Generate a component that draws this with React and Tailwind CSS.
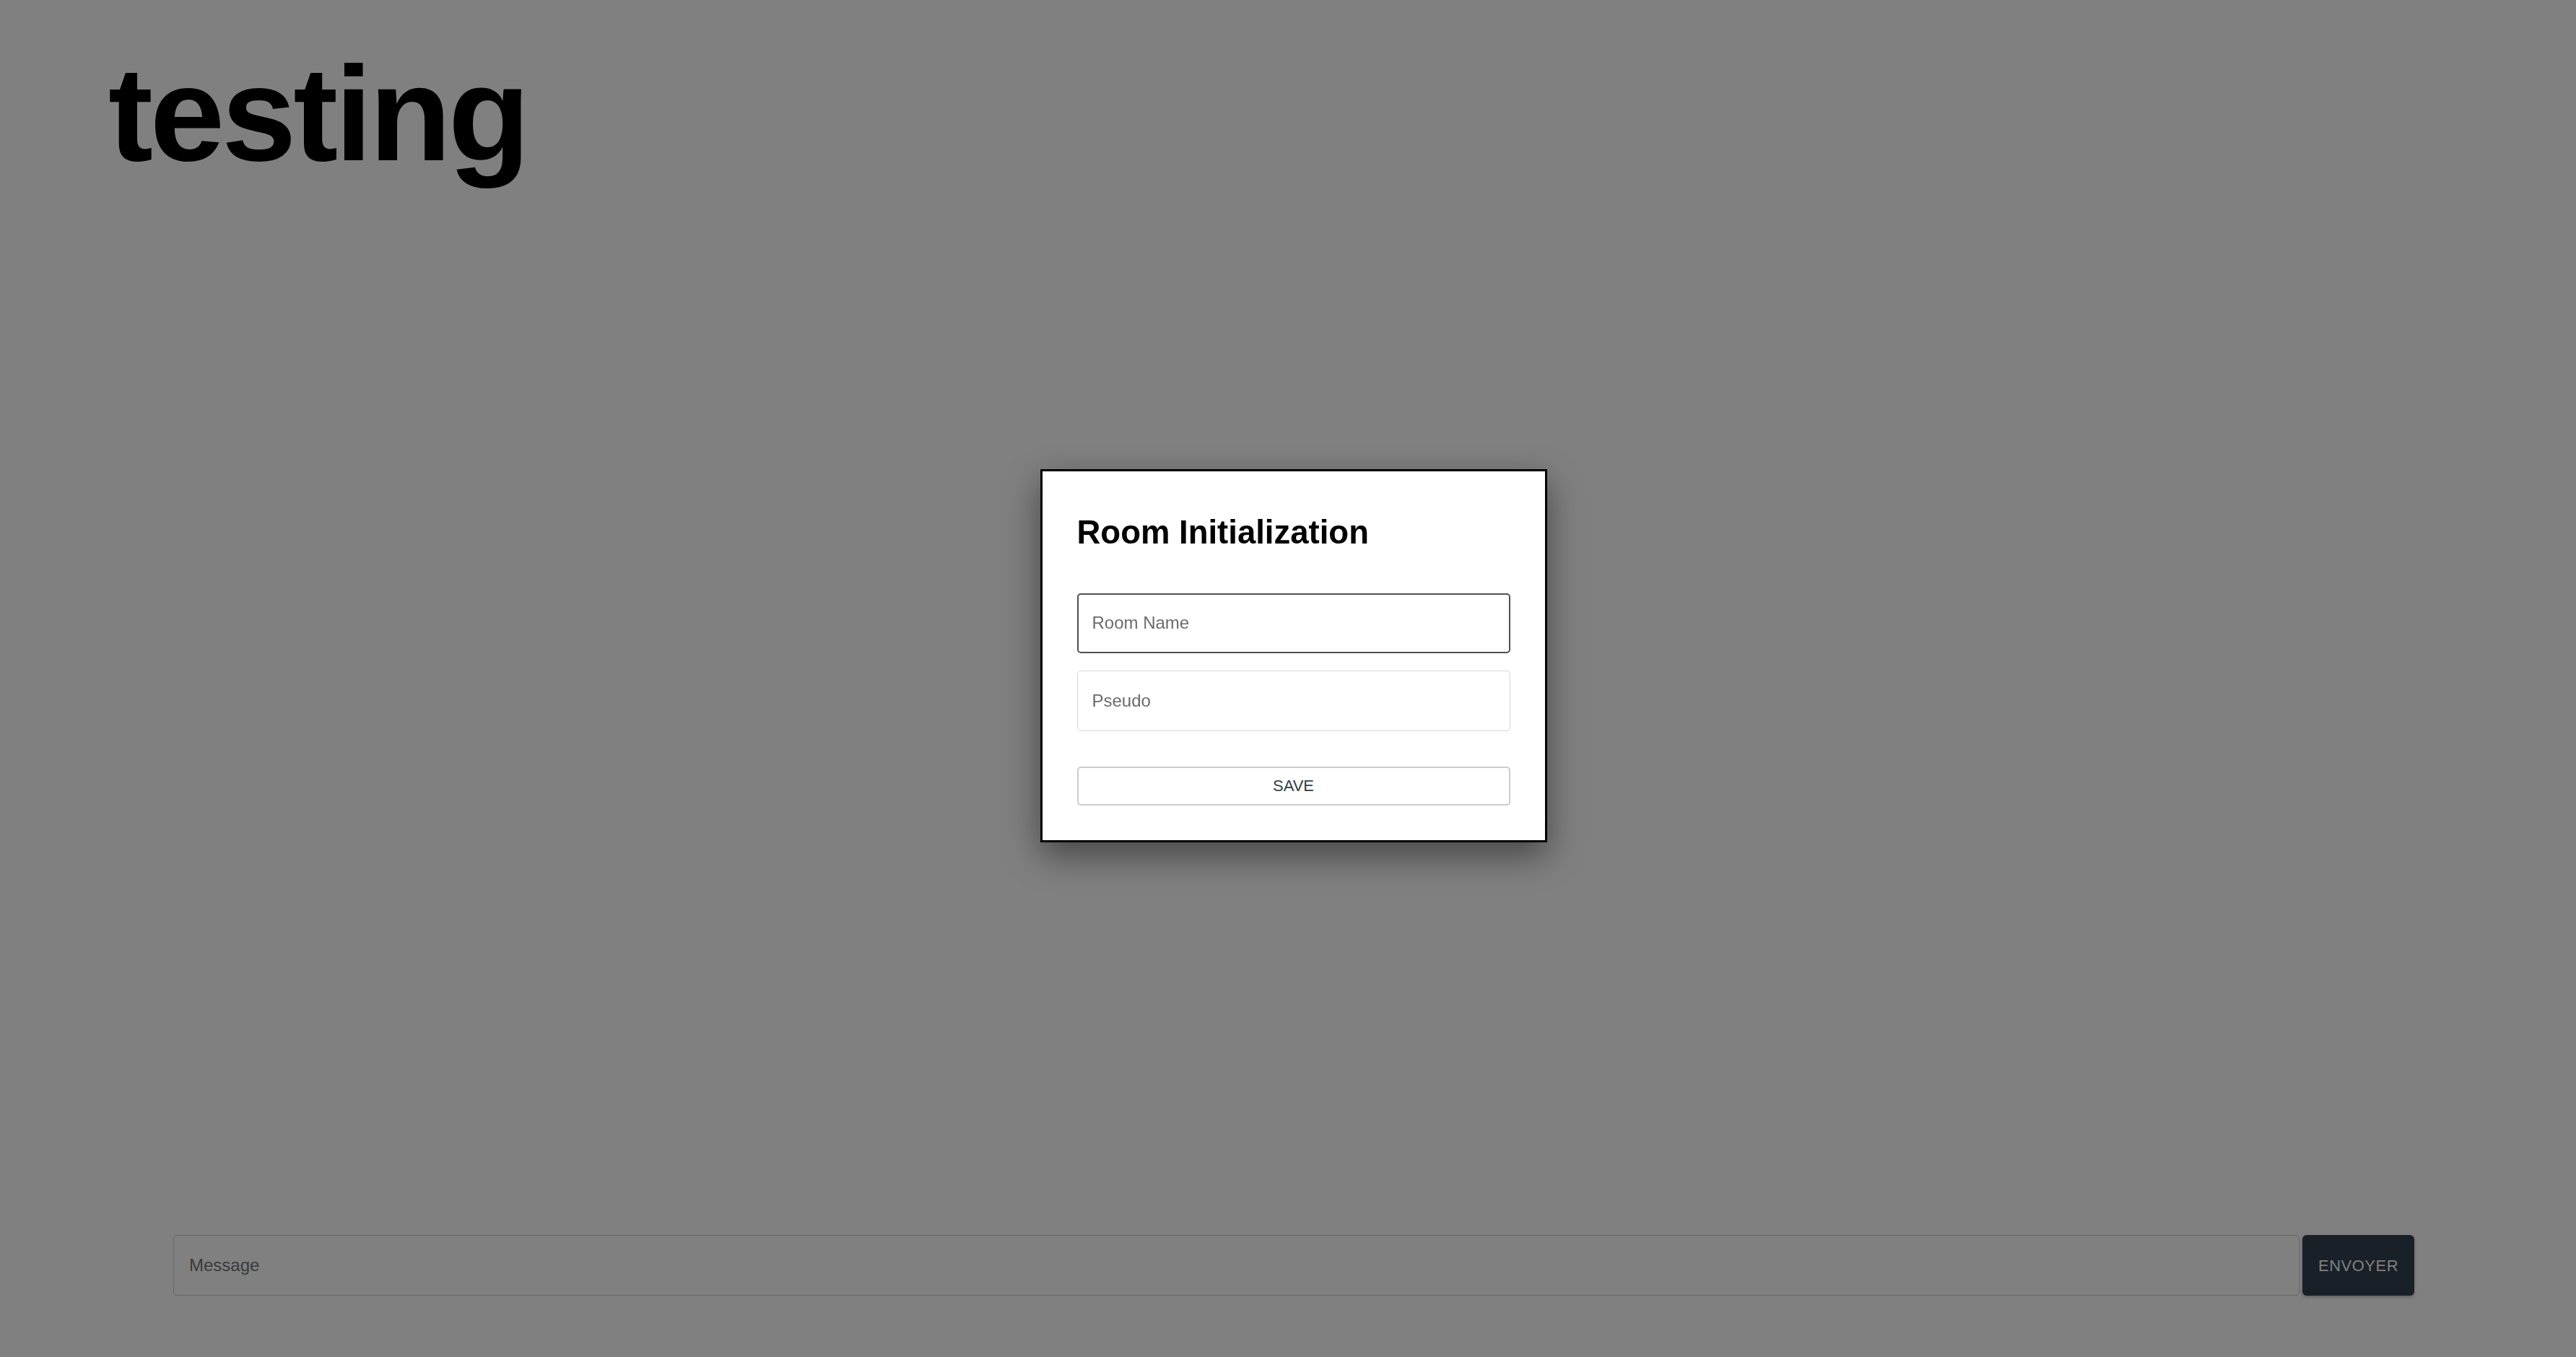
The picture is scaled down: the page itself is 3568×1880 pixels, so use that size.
export default function App() {
  return (
    <div
      className="relative flex h-screen flex-col bg-[#808080]"
      style={{ fontFamily: '"Liberation Sans", Arial, sans-serif' }}
    >
      <h1 className="pl-[150px] pt-[65px] text-[186px] font-bold leading-none tracking-[-4.2px] text-black">
        testing
      </h1>

      <div className="flex-1" />

      <form className="flex gap-[4px] pb-[85px] pl-[240px] pr-[224px]" onSubmit={(e) => e.preventDefault()}>
        <input
          type="text"
          placeholder="Message"
          className="h-[84px] flex-1 rounded-[5px] border border-[#686868] bg-transparent px-[21px] text-[24px] text-[#333] outline-none placeholder:text-[#3a3a3a]"
        />
        <button
          type="submit"
          className="h-[84px] w-[155px] rounded-[6px] bg-[#1a2027] text-[22px] tracking-[0.5px] text-[#808080] shadow-[0_2px_4px_rgba(0,0,0,0.25)]"
        >
          ENVOYER
        </button>
      </form>

      {/* room init dialog */}
      <div className="fixed inset-0 flex items-start justify-center pl-[15px] pt-[650px]">
        <div className="w-[702px] border-[3px] border-black bg-white px-[48px] pb-[48px] pt-[62px] shadow-[0_18px_45px_rgba(0,0,0,0.45)]">
          <h2 className="text-[45.5px] font-bold leading-none text-black">Room Initialization</h2>
          <div className="mt-[61px] flex flex-col gap-[24px]">
            <input
              type="text"
              placeholder="Room Name"
              className="h-[83px] w-full rounded-[5px] border-2 border-[#505050] px-[19px] text-[24px] text-[#222] outline-none placeholder:text-[#6b6b6b]"
            />
            <input
              type="text"
              placeholder="Pseudo"
              className="h-[84px] w-full rounded-[5px] border border-[#d3d6d9] px-[20px] text-[24px] text-[#222] outline-none placeholder:text-[#6b6b6b]"
            />
          </div>
          <button
            type="button"
            className="mt-[49px] h-[54px] w-full rounded-[5px] border-2 border-[#c9cdd0] bg-white text-[22px] text-[#2f3e48]"
          >
            SAVE
          </button>
        </div>
      </div>
    </div>
  );
}
